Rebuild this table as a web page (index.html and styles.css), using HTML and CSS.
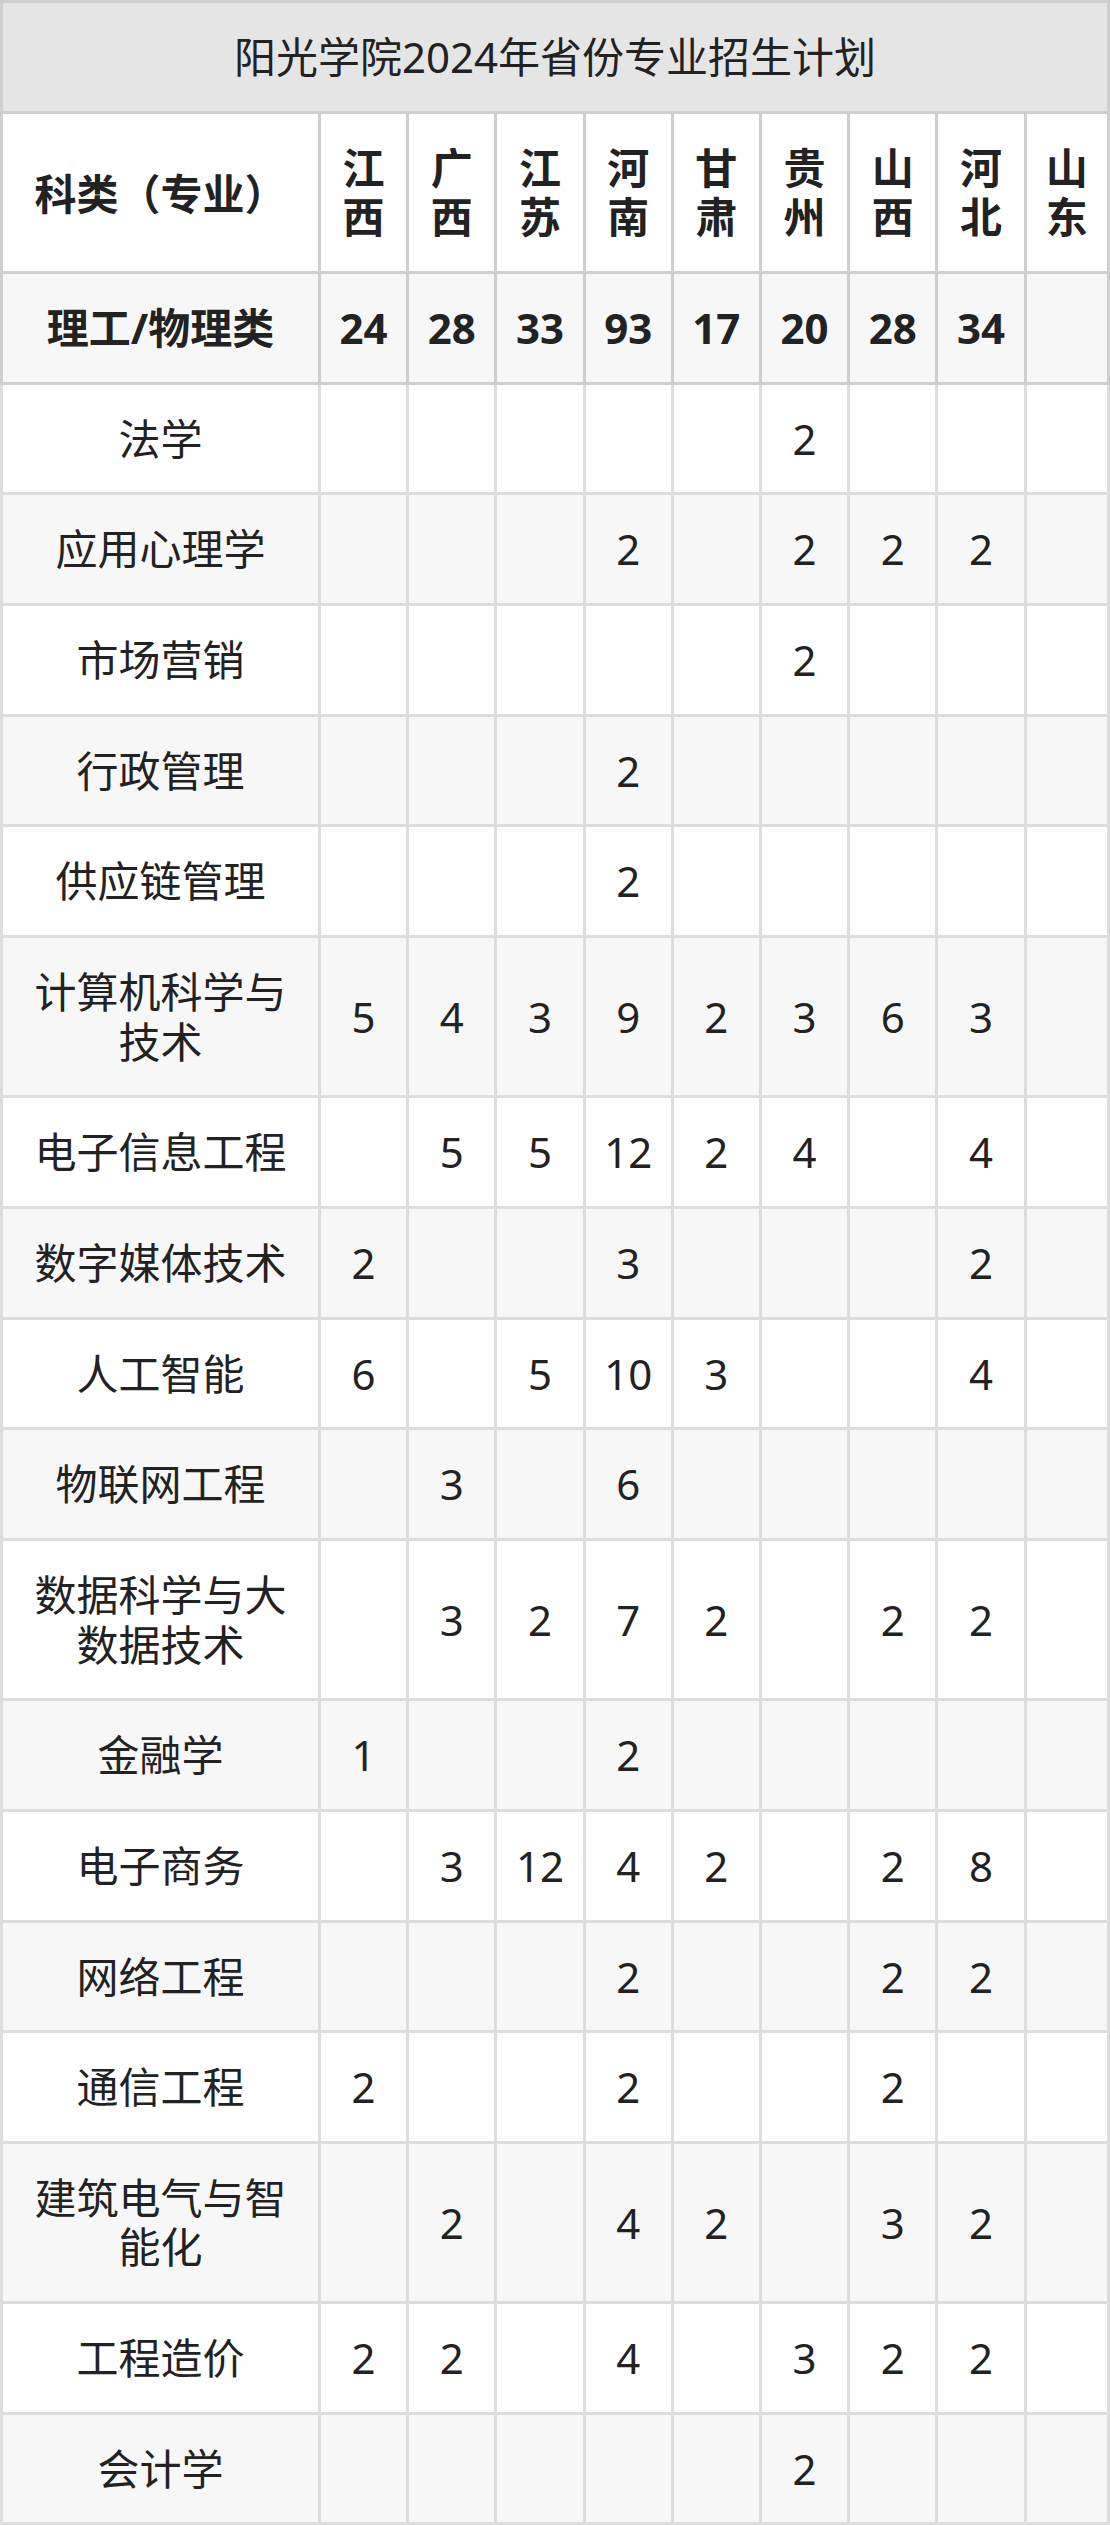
FILE: index.html
```html
<!DOCTYPE html>
<html lang="zh-CN">
<head>
<meta charset="utf-8">
<title>阳光学院2024年省份专业招生计划</title>
<link rel="stylesheet" href="styles.css">
</head>
<body>
<table class="plan">
  <colgroup>
    <col class="c-major">
    <col class="c-num"><col class="c-num"><col class="c-num"><col class="c-num">
    <col class="c-num"><col class="c-num"><col class="c-num"><col class="c-num">
    <col class="c-last">
  </colgroup>
  <thead>
    <tr class="title-row"><th colspan="10">阳光学院2024年省份专业招生计划</th></tr>
    <tr class="head-row">
      <th>科类<span class="paren">（</span>专业<span class="paren">）</span></th>
      <th>江西</th><th>广西</th><th>江苏</th><th>河南</th><th>甘肃</th><th>贵州</th><th>山西</th><th>河北</th><th>山东</th>
    </tr>
    <tr class="sum-row">
      <th>理工/物理类</th>
      <th>24</th><th>28</th><th>33</th><th>93</th><th>17</th><th>20</th><th>28</th><th>34</th><th></th>
    </tr>
  </thead>
  <tbody>
    <tr><td>法学</td><td></td><td></td><td></td><td></td><td></td><td>2</td><td></td><td></td><td></td></tr>
    <tr><td>应用心理学</td><td></td><td></td><td></td><td>2</td><td></td><td>2</td><td>2</td><td>2</td><td></td></tr>
    <tr><td>市场营销</td><td></td><td></td><td></td><td></td><td></td><td>2</td><td></td><td></td><td></td></tr>
    <tr><td>行政管理</td><td></td><td></td><td></td><td>2</td><td></td><td></td><td></td><td></td><td></td></tr>
    <tr><td>供应链管理</td><td></td><td></td><td></td><td>2</td><td></td><td></td><td></td><td></td><td></td></tr>
    <tr><td>计算机科学与技术</td><td>5</td><td>4</td><td>3</td><td>9</td><td>2</td><td>3</td><td>6</td><td>3</td><td></td></tr>
    <tr><td>电子信息工程</td><td></td><td>5</td><td>5</td><td>12</td><td>2</td><td>4</td><td></td><td>4</td><td></td></tr>
    <tr><td>数字媒体技术</td><td>2</td><td></td><td></td><td>3</td><td></td><td></td><td></td><td>2</td><td></td></tr>
    <tr><td>人工智能</td><td>6</td><td></td><td>5</td><td>10</td><td>3</td><td></td><td></td><td>4</td><td></td></tr>
    <tr><td>物联网工程</td><td></td><td>3</td><td></td><td>6</td><td></td><td></td><td></td><td></td><td></td></tr>
    <tr><td>数据科学与大数据技术</td><td></td><td>3</td><td>2</td><td>7</td><td>2</td><td></td><td>2</td><td>2</td><td></td></tr>
    <tr><td>金融学</td><td>1</td><td></td><td></td><td>2</td><td></td><td></td><td></td><td></td><td></td></tr>
    <tr><td>电子商务</td><td></td><td>3</td><td>12</td><td>4</td><td>2</td><td></td><td>2</td><td>8</td><td></td></tr>
    <tr><td>网络工程</td><td></td><td></td><td></td><td>2</td><td></td><td></td><td>2</td><td>2</td><td></td></tr>
    <tr><td>通信工程</td><td>2</td><td></td><td></td><td>2</td><td></td><td></td><td>2</td><td></td><td></td></tr>
    <tr><td>建筑电气与智能化</td><td></td><td>2</td><td></td><td>4</td><td>2</td><td></td><td>3</td><td>2</td><td></td></tr>
    <tr><td>工程造价</td><td>2</td><td>2</td><td></td><td>4</td><td></td><td>3</td><td>2</td><td>2</td><td></td></tr>
    <tr><td>会计学</td><td></td><td></td><td></td><td></td><td></td><td>2</td><td></td><td></td><td></td></tr>
  </tbody>
</table>
</body>
</html>
```
FILE: styles.css
```css
html, body {
  margin: 0;
  padding: 0;
  background: #ffffff;
}

.plan {
  width: 1110px;
  table-layout: fixed;
  border-collapse: collapse;
  font-family: "Noto Sans", "Noto Sans CJK SC", sans-serif;
  font-size: 42px;
  line-height: 49.5px;
  color: #222222;
}

.c-major { width: 318px; }
.c-num { width: 88.2px; }
.c-last { width: auto; }

.plan th,
.plan td {
  padding: 29.1px 10px;
  text-align: center;
  vertical-align: middle;
  border: 3px solid #dddddd;
}

.plan thead th {
  border-color: #cfcfcf;
  font-weight: 700;
}

.plan .title-row th {
  background: #e5e5e5;
  font-weight: 400;
}

.plan .head-row th {
  background: #ffffff;
}

.plan .sum-row th {
  background: #f7f7f7;
}

.paren {
  font-family: "Noto Sans CJK TC", "Noto Sans CJK SC", sans-serif;
}

.plan tr > :first-child {
  padding-left: 20px;
  padding-right: 20px;
}

.plan tbody tr:nth-child(odd) td {
  background: #ffffff;
}

.plan tbody tr:nth-child(even) td {
  background: #f7f7f7;
}
```
